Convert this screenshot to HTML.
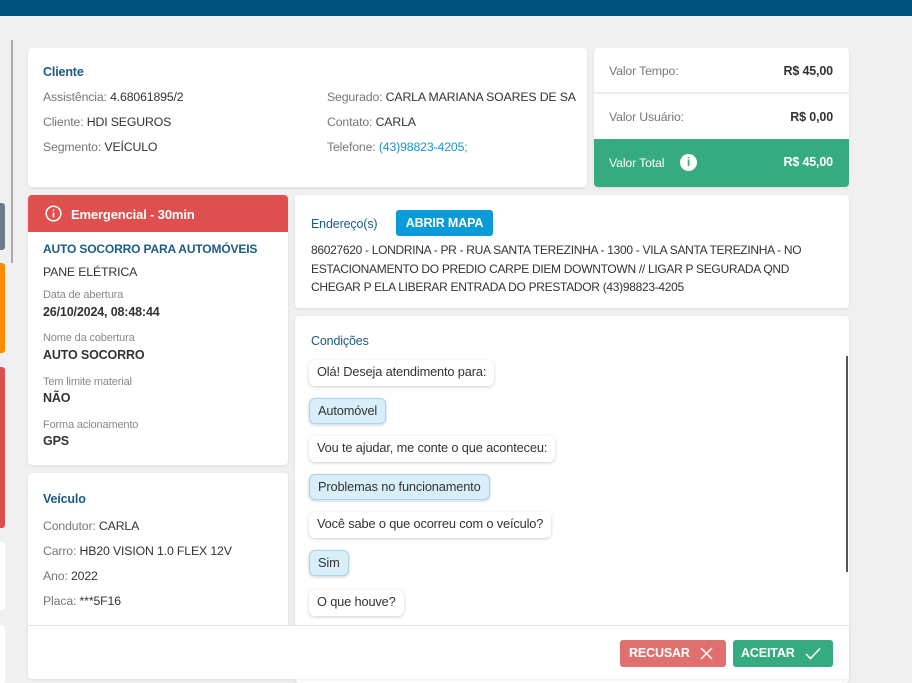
<!DOCTYPE html>
<html><head><meta charset="utf-8"><style>
*{margin:0;padding:0;box-sizing:border-box}
body{width:912px;height:683px;overflow:hidden;background:#f0f0f0;font-family:"Liberation Sans",sans-serif;font-size:12.3px;letter-spacing:-0.15px;color:#333;position:relative}
.a{position:absolute}
.card{position:absolute;background:#fff;border-radius:4px;box-shadow:0 1px 3px rgba(0,0,0,.08)}
.t{color:#1b5c86;font-weight:bold;font-size:12.5px}
.g{color:#777}
.l{position:absolute;white-space:nowrap}
.b{position:absolute;left:14px;height:26px;line-height:24px;padding:0 8px;border-radius:6px;background:#fff;box-shadow:0 1px 3px rgba(0,0,0,.2);white-space:nowrap;font-size:12.8px}
.b.s{background:#d8eef8;border:1px solid #a6d4ea}
.lab{color:#888;font-size:11px}
.v{font-weight:bold;font-size:12.5px;color:#333}
</style></head><body>
<div class="a" style="left:0;top:0;width:912px;height:16px;background:#00527f"></div>
<div class="a" style="left:11px;top:40px;width:2px;height:223px;background:#aaa"></div>
<div class="a" style="left:0;top:203px;width:5px;height:47px;background:#6d7a8a;border-radius:0 3px 3px 0"></div>
<div class="a" style="left:0;top:263px;width:5px;height:90px;background:#ff8c00;border-radius:0 3px 3px 0"></div>
<div class="a" style="left:0;top:367px;width:5px;height:161px;background:#de4f4f;border-radius:0 3px 3px 0"></div>
<div class="a" style="left:0;top:542px;width:5px;height:68px;background:#fff;border-radius:0 3px 3px 0"></div>
<div class="a" style="left:0;top:625px;width:5px;height:58px;background:#fff;border-radius:0 3px 3px 0"></div>

<div class="card" style="left:28px;top:48px;width:559px;height:139px">
 <div class="l t" style="left:15px;top:17px">Cliente</div>
 <div class="l" style="left:15px;top:42px"><span class="g">Assistência:</span> 4.68061895/2</div>
 <div class="l" style="left:15px;top:67px"><span class="g">Cliente:</span> HDI SEGUROS</div>
 <div class="l" style="left:15px;top:92px"><span class="g">Segmento:</span> VEÍCULO</div>
 <div class="l" style="left:299px;top:42px"><span class="g">Segurado:</span> CARLA MARIANA SOARES DE SA</div>
 <div class="l" style="left:299px;top:67px"><span class="g">Contato:</span> CARLA</div>
 <div class="l" style="left:299px;top:92px"><span class="g">Telefone:</span> <span style="color:#1a96d4">(43)98823-4205;</span></div>
</div>

<div class="card" style="left:594px;top:48px;width:255px;height:139px;overflow:hidden">
 <div class="l g" style="left:15px;top:16px">Valor Tempo:</div>
 <div class="l v" style="right:16px;top:16px">R$ 45,00</div>
 <div class="a" style="left:0;top:44px;width:255px;height:2px;background:#eee"></div>
 <div class="l g" style="left:15px;top:62px">Valor Usuário:</div>
 <div class="l v" style="right:16px;top:62px">R$ 0,00</div>
 <div class="a" style="left:0;top:91px;width:255px;height:48px;background:#36ab80"></div>
 <div class="l" style="left:15px;top:108px;color:#fff">Valor Total</div>
 <div class="a" style="left:86px;top:106px;width:17px;height:17px;border-radius:50%;background:#fff;color:#36ab80;font-weight:bold;font-size:12px;text-align:center;line-height:17px;letter-spacing:0">i</div>
 <div class="l v" style="right:16px;top:107px;color:#fff">R$ 45,00</div>
</div>

<div class="card" style="left:28px;top:195px;width:260px;height:270px;overflow:hidden">
 <div class="a" style="left:0;top:0;width:260px;height:37px;background:#de4f4f"></div>
 <svg class="a" style="left:17px;top:10px" width="17" height="17" viewBox="0 0 17 17"><circle cx="8.5" cy="8.5" r="7.3" fill="none" stroke="#fff" stroke-width="1.5"/><path d="M8.5 7.5v5M8.5 4.5v1.3" stroke="#fff" stroke-width="1.6"/></svg>
 <div class="l" style="left:43px;top:12px;color:#fff;font-weight:bold;font-size:13px">Emergencial - 30min</div>
 <div class="l t" style="left:15px;top:47px;font-size:12px">AUTO SOCORRO PARA AUTOMÓVEIS</div>
 <div class="l" style="left:15px;top:70px">PANE ELÉTRICA</div>
 <div class="l lab" style="left:15px;top:94px">Data de abertura</div>
 <div class="l v" style="left:15px;top:110px">26/10/2024, 08:48:44</div>
 <div class="l lab" style="left:15px;top:137px">Nome da cobertura</div>
 <div class="l v" style="left:15px;top:153px">AUTO SOCORRO</div>
 <div class="l lab" style="left:15px;top:181px">Tem limite material</div>
 <div class="l v" style="left:15px;top:196px">NÃO</div>
 <div class="l lab" style="left:15px;top:224px">Forma acionamento</div>
 <div class="l v" style="left:15px;top:239px">GPS</div>
</div>

<div class="card" style="left:28px;top:473px;width:260px;height:160px">
 <div class="l t" style="left:15px;top:19px">Veículo</div>
 <div class="l" style="left:15px;top:46px"><span class="g">Condutor:</span> CARLA</div>
 <div class="l" style="left:15px;top:71px"><span class="g">Carro:</span> HB20 VISION 1.0 FLEX 12V</div>
 <div class="l" style="left:15px;top:96px"><span class="g">Ano:</span> 2022</div>
 <div class="l" style="left:15px;top:121px"><span class="g">Placa:</span> ***5F16</div>
</div>

<div class="card" style="left:295px;top:195px;width:554px;height:113px">
 <div class="l t" style="left:16px;top:22px;font-weight:normal">Endereço(s)</div>
 <div class="a" style="left:101px;top:15px;width:97px;height:26px;background:#0a9bd8;border-radius:3px;color:#fff;font-weight:bold;font-size:12.5px;text-align:center;line-height:26px">ABRIR MAPA</div>
 <div class="a" style="left:16px;top:46px;font-size:12px;line-height:18.5px;letter-spacing:-0.3px;white-space:nowrap">86027620 - LONDRINA - PR - RUA SANTA TEREZINHA - 1300 - VILA SANTA TEREZINHA - NO<br>ESTACIONAMENTO DO PREDIO CARPE DIEM DOWNTOWN // LIGAR P SEGURADA QND<br>CHEGAR P ELA LIBERAR ENTRADA DO PRESTADOR (43)98823-4205</div>
</div>

<div class="card" style="left:295px;top:316px;width:554px;height:367px;overflow:hidden">
 <div class="l t" style="left:16px;top:18px;font-weight:normal">Condições</div>
 <div class="a" style="left:551px;top:40px;width:2px;height:216px;background:#555"></div>
 <div class="b" style="top:44px">Olá! Deseja atendimento para:</div>
 <div class="b s" style="top:82px">Automóvel</div>
 <div class="b" style="top:120px">Vou te ajudar, me conte o que aconteceu:</div>
 <div class="b s" style="top:158px">Problemas no funcionamento</div>
 <div class="b" style="top:196px">Você sabe o que ocorreu com o veículo?</div>
 <div class="b s" style="top:234px">Sim</div>
 <div class="b" style="top:274px">O que houve?</div>
</div>

<div class="a" style="left:28px;top:625px;width:821px;height:54px;background:#fff;border-top:1px solid #e4e4e4;border-radius:0 0 4px 4px;box-shadow:0 1px 3px rgba(0,0,0,.08)">
 <div class="a" style="left:592px;top:14px;width:106px;height:27px;background:#e07070;border-radius:3px;color:#fff;font-weight:bold;font-size:12.5px;line-height:27px;padding-left:9px">RECUSAR<svg class="a" style="left:80px;top:7px" width="13" height="13"><path d="M1 1L12 12M12 1L1 12" stroke="#fff" stroke-width="1.5"/></svg></div>
 <div class="a" style="left:705px;top:14px;width:100px;height:27px;background:#36ab80;border-radius:3px;color:#fff;font-weight:bold;font-size:12.5px;line-height:27px;padding-left:8px">ACEITAR<svg class="a" style="left:72px;top:7px" width="16" height="13"><path d="M1 7L5.5 11.5L15 1.5" fill="none" stroke="#fff" stroke-width="1.5"/></svg></div>
</div>
</body></html>
